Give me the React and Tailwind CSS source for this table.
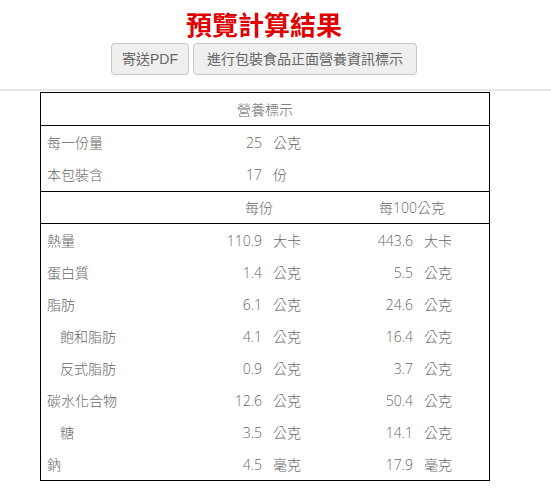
import React from "react";

const cols = "grid grid-cols-[142px_84px_68px_83px_71px]";

const rows = [
  { name: "熱量", a: "110.9", b: "443.6", unit: "大卡" },
  { name: "蛋白質", a: "1.4", b: "5.5", unit: "公克" },
  { name: "脂肪", a: "6.1", b: "24.6", unit: "公克" },
  { name: "飽和脂肪", a: "4.1", b: "16.4", unit: "公克", sub: true },
  { name: "反式脂肪", a: "0.9", b: "3.7", unit: "公克", sub: true },
  { name: "碳水化合物", a: "12.6", b: "50.4", unit: "公克" },
  { name: "糖", a: "3.5", b: "14.1", unit: "公克", sub: true },
  { name: "鈉", a: "4.5", b: "17.9", unit: "毫克" },
];

const App = () => {
  return (
    <div className="min-h-screen bg-white pt-[6px] font-['Open_Sans','Noto_Sans_CJK_TC_Light','Noto_Sans_CJK_TC',sans-serif]">
      <h1 className="pr-[23px] text-center text-[26px] leading-[36px] font-bold text-[#e00000] font-['Noto_Sans_CJK_TC',sans-serif]">
        預覽計算結果
      </h1>
      <div className="mt-[1px] flex justify-center gap-[4px] pr-[23px]">
        <button className="h-[32px] px-[10px] rounded-[4px] border border-[#c8c8c8] bg-[#efefef] text-[14px] text-[#666] font-['Liberation_Sans','Noto_Sans_CJK_TC',sans-serif]">
          寄送PDF
        </button>
        <button className="h-[32px] px-[13px] rounded-[4px] border border-[#c8c8c8] bg-[#efefef] text-[14px] text-[#666] font-['Liberation_Sans','Noto_Sans_CJK_TC',sans-serif]">
          進行包裝食品正面營養資訊標示
        </button>
      </div>
      <div className="mt-[14px] h-[2px] bg-[#e6e6e6]" />
      <div className="ml-[40px] mt-[1px] w-[450px] border border-black text-[14px] font-light text-[#666]">
        <div className="h-[33px] border-b border-black flex items-center justify-center">營養標示</div>
        <div className="border-b border-black">
          <div className={`${cols} h-[32px] items-center`}>
            <div className="pl-[6px]">每一份量</div>
            <div className="text-right pr-[5px]">25</div>
            <div className="pl-[6px]">公克</div>
          </div>
          <div className={`${cols} h-[33px] items-center`}>
            <div className="pl-[6px]">本包裝含</div>
            <div className="text-right pr-[5px]">17</div>
            <div className="pl-[6px]">份</div>
          </div>
        </div>
        <div className={`${cols} h-[32px] items-center border-b border-black`}>
          <div />
          <div className="col-span-2 text-center">每份</div>
          <div className="col-span-2 text-center">每100公克</div>
        </div>
        {rows.map((r) => (
          <div key={r.name} className={`${cols} h-[32px] items-center`}>
            <div className={r.sub ? "pl-[19px]" : "pl-[6px]"}>{r.name}</div>
            <div className="text-right pr-[5px]">{r.a}</div>
            <div className="pl-[6px]">{r.unit}</div>
            <div className="text-right pr-[5px]">{r.b}</div>
            <div className="pl-[6px]">{r.unit}</div>
          </div>
        ))}
      </div>
    </div>
  );
};

export default App;
